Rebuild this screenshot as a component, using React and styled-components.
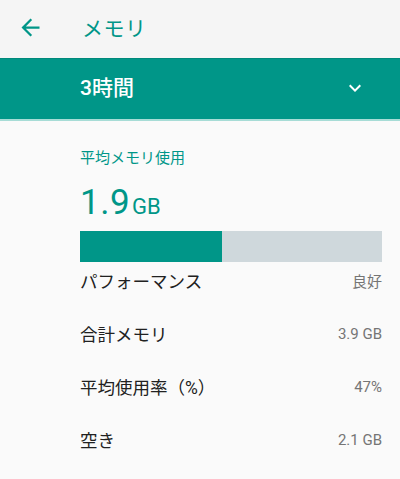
import React from "react";
import styled, { createGlobalStyle } from "styled-components";

const Global = createGlobalStyle`
  html, body { margin: 0; padding: 0; background: #fafafa; }
  body { font-family: Roboto, "Noto Sans CJK JP", sans-serif; -webkit-font-smoothing: antialiased; }
`;

const TEAL = "#009688";

const Page = styled.div`
  width: 400px;
  height: 479px;
  background: #fafafa;
  overflow: hidden;
  display: flex;
  flex-direction: column;
`;

const Toolbar = styled.header`
  height: 58px;
  background: #f5f5f5;
  display: flex;
  align-items: center;
  flex-shrink: 0;
`;

const BackButton = styled.div`
  width: 27px;
  height: 27px;
  margin-left: 17px;
  margin-right: 38px;
  margin-bottom: 4px;
  color: ${TEAL};
  display: flex;
  svg { width: 27px; height: 27px; display: block; }
`;

const Title = styled.h1`
  margin: 0 0 4px 0;
  font-size: 21px;
  font-weight: 400;
  color: ${TEAL};
  letter-spacing: 0.5px;
`;

const RangeBar = styled.div`
  height: 60px;
  background: ${TEAL};
  border-top: 1px solid #00897b;
  border-bottom: 2px solid #a7dcd6;
  display: flex;
  align-items: center;
  justify-content: space-between;
  padding: 0 33px 0 80px;
  flex-shrink: 0;
`;

const RangeLabel = styled.span`
  color: #ffffff;
  font-size: 21px;
  font-weight: 500;
  margin-bottom: 6px;
`;

const Chevron = styled.svg`
  width: 24px;
  height: 24px;
  display: block;
  margin-bottom: 2px;
`;

const Content = styled.main`
  padding: 27px 18px 0 80px;
  display: flex;
  flex-direction: column;
`;

const SectionLabel = styled.div`
  color: ${TEAL};
  font-size: 15px;
  line-height: 20px;
`;

const Amount = styled.div`
  color: ${TEAL};
  display: flex;
  align-items: baseline;
  margin-top: 15px;
  line-height: 40px;
`;

const AmountNumber = styled.span`
  font-size: 35px;
  letter-spacing: 0.5px;
`;

const AmountUnit = styled.span`
  font-size: 22px;
  margin-left: 2px;
`;

const Meter = styled.div`
  height: 31px;
  background: #cfd8dc;
  margin-top: 4px;
  display: flex;
`;

const MeterFill = styled.div`
  background: ${TEAL};
  height: 100%;
`;

const Row = styled.div`
  display: flex;
  align-items: center;
  justify-content: space-between;
  height: 53px;
`;

const FirstRow = styled(Row)`
  margin-top: -8px;
`;

const RowLabel = styled.span`
  color: #212121;
  font-size: 17.5px;
`;

const RowValue = styled.span`
  color: #757575;
  font-size: 15px;
`;

const rows = [
  ["合計メモリ", "3.9 GB"],
  ["平均使用率（%）", "47%"],
  ["空き", "2.1 GB"],
];

export default function App() {
  return (
    <Page>
      <Global />
      <Toolbar>
        <BackButton>
          <svg viewBox="0 0 24 24" fill="currentColor">
            <path d="M20 11H7.83l5.59-5.59L12 4l-8 8 8 8 1.41-1.41L7.83 13H20v-2z" />
          </svg>
        </BackButton>
        <Title>メモリ</Title>
      </Toolbar>
      <RangeBar>
        <RangeLabel>3時間</RangeLabel>
        <Chevron viewBox="0 0 24 24" fill="#ffffff">
          <path d="M16.59 8.59L12 13.17 7.41 8.59 6 10l6 6 6-6z" />
        </Chevron>
      </RangeBar>
      <Content>
        <SectionLabel>平均メモリ使用</SectionLabel>
        <Amount>
          <AmountNumber>1.9</AmountNumber>
          <AmountUnit>GB</AmountUnit>
        </Amount>
        <Meter>
          <MeterFill style={{ width: "47%" }} />
        </Meter>
        <FirstRow>
          <RowLabel>パフォーマンス</RowLabel>
          <RowValue>良好</RowValue>
        </FirstRow>
        {rows.map(([label, value]) => (
          <Row key={label}>
            <RowLabel>{label}</RowLabel>
            <RowValue>{value}</RowValue>
          </Row>
        ))}
      </Content>
    </Page>
  );
}
